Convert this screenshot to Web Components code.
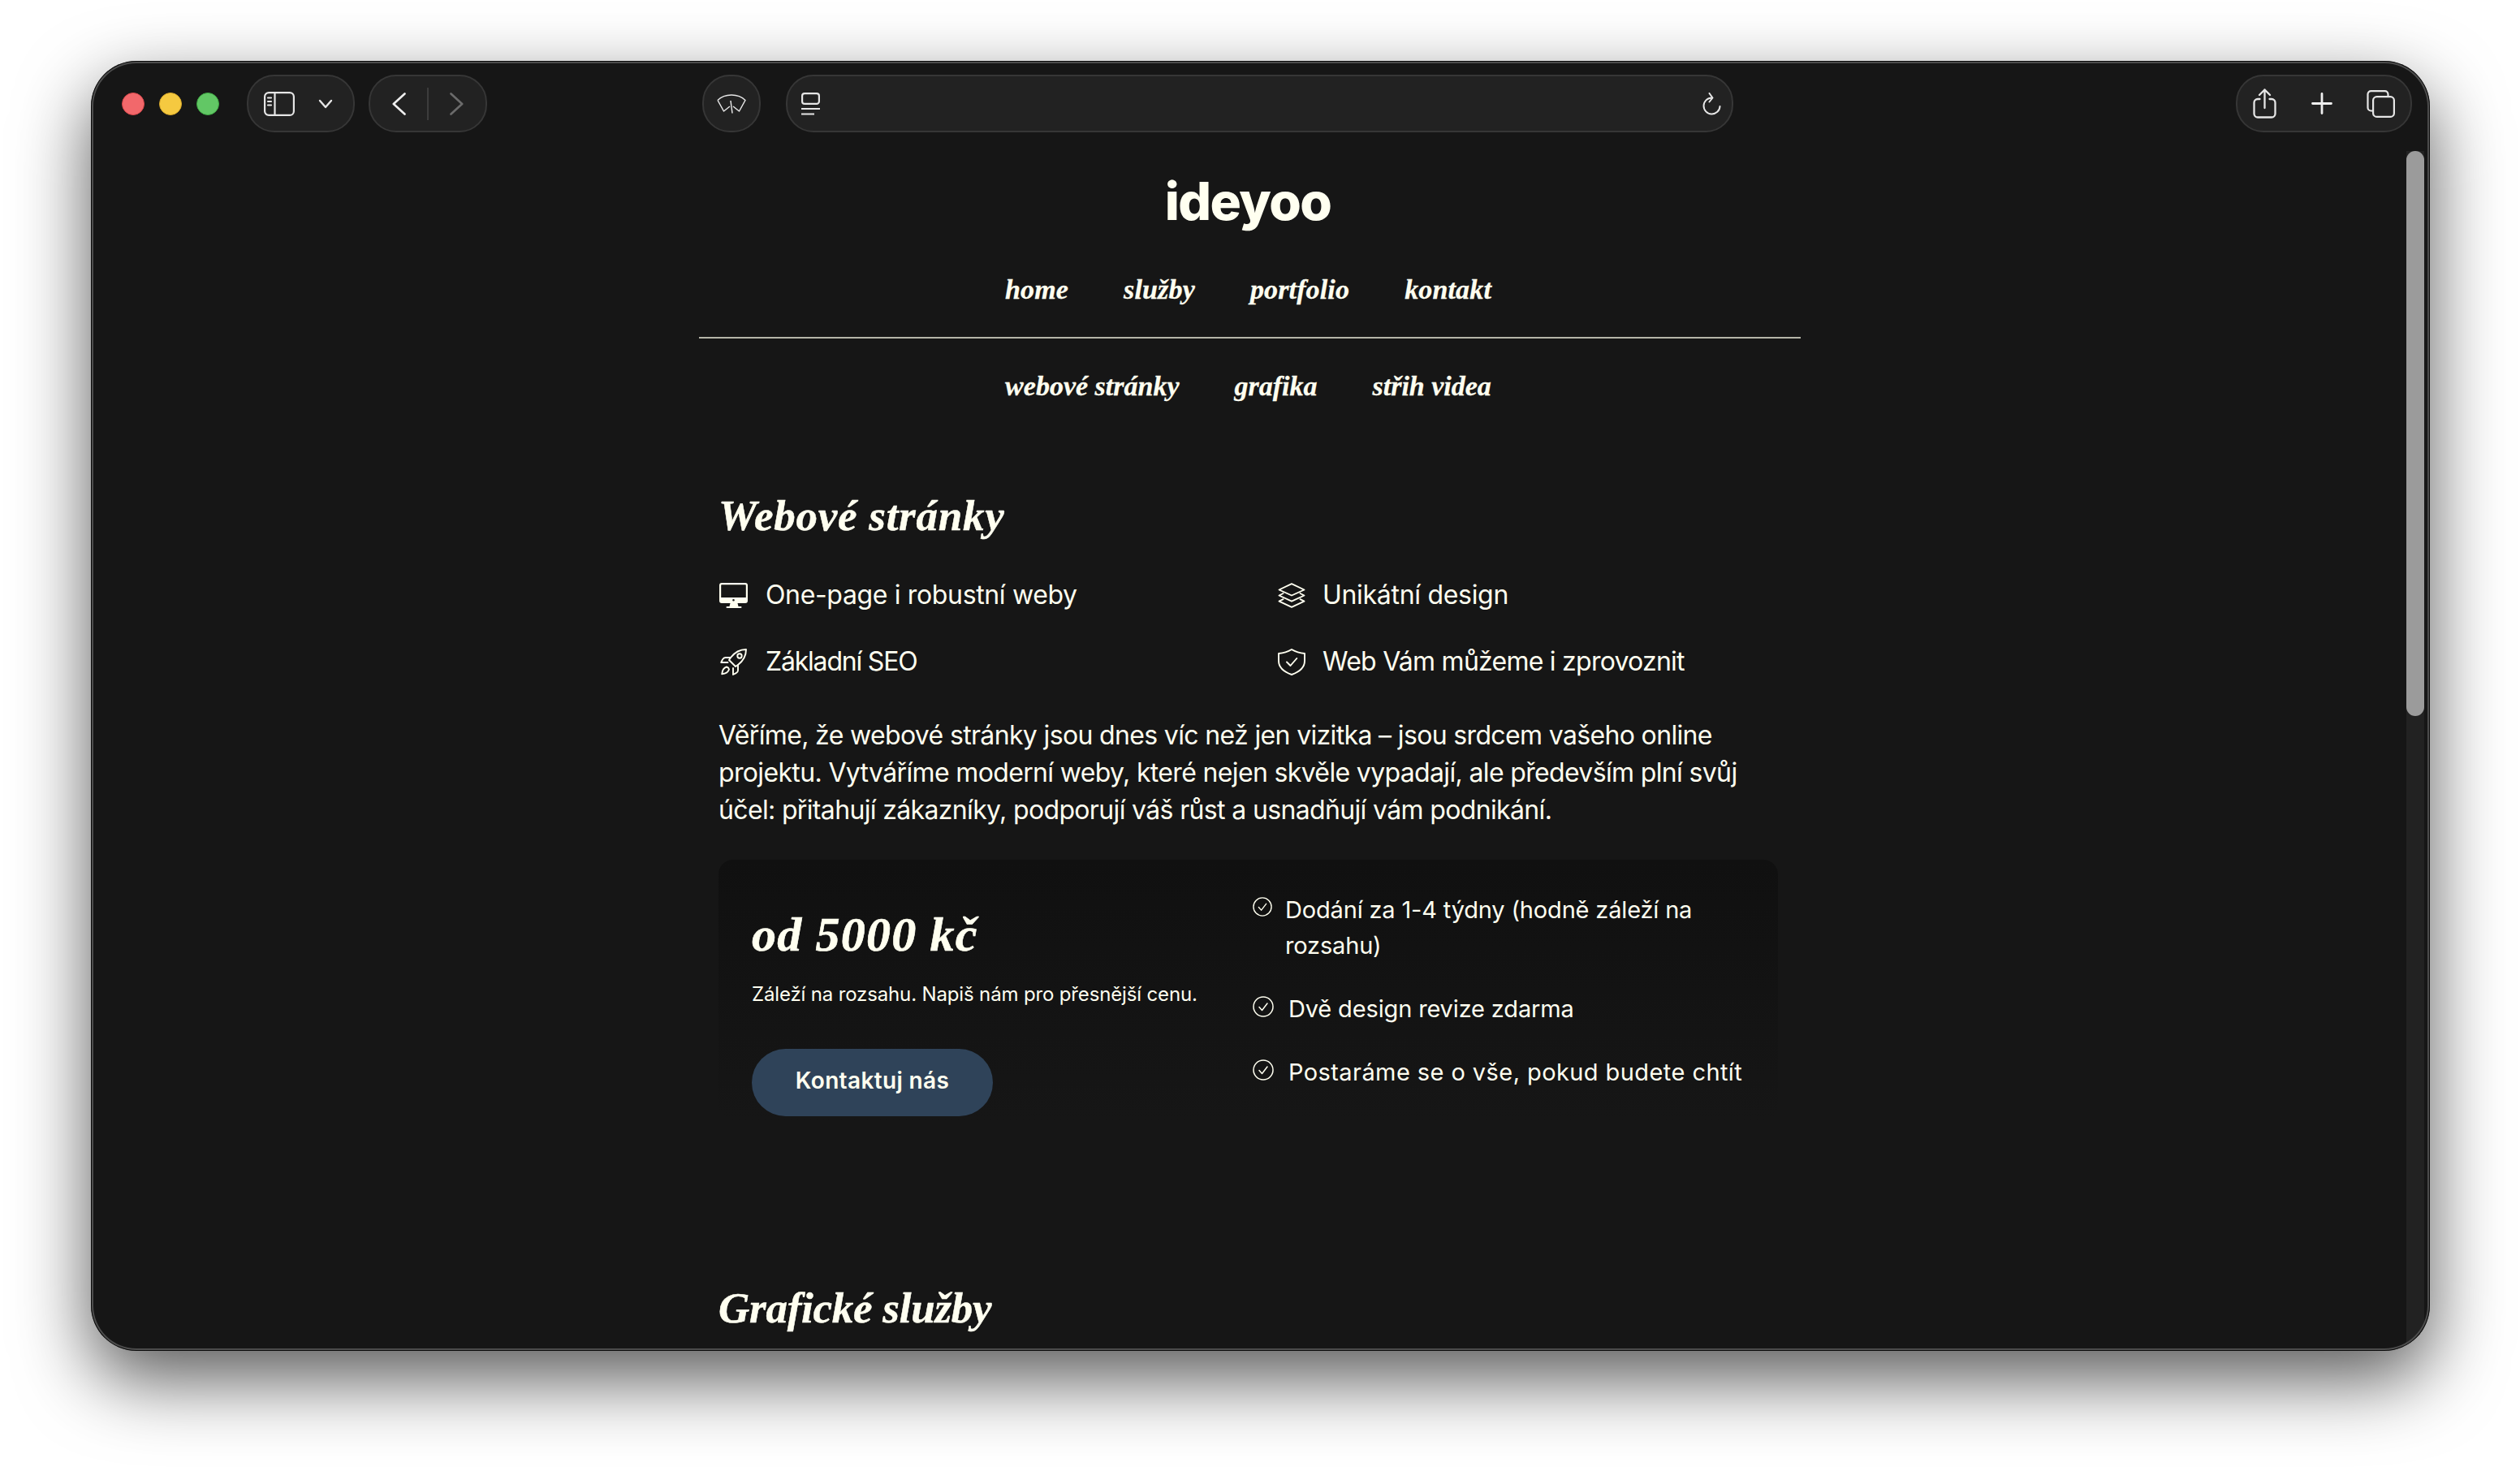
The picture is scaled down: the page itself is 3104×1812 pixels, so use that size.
<!DOCTYPE html>
<html lang="cs">
<head>
<meta charset="utf-8">
<title>ideyoo</title>
<style>
    html, body { margin: 0; height: 100%; background: #fff; }
    body { display: flex; padding: 75px 111px 148px 112px; box-sizing: border-box; height: 1812px; overflow: hidden; }
    svg { display: block; }
</style>
</head>
<body>
<browser-window>
    <browser-toolbar slot="toolbar"></browser-toolbar>
    <site-header></site-header>
    <service-section title="Webové stránky" spacing="0.75">
        <feature-list>
            <feature-item style="letter-spacing: -0.35px">
                <svg slot="icon" width="35" height="31" viewBox="0 0 35 31"><path fill="#fffff0" fill-rule="evenodd" d="M3 0h29a3 3 0 0 1 3 3v19a3 3 0 0 1-3 3h-9.500l1 4h3a1 1 0 0 1 0 2H9.500a1 1 0 0 1 0-2h3l1-4H3a3 3 0 0 1-3-3V3a3 3 0 0 1 3-3zm0 2.200a.8.8 0 0 0-.8.8v15h30.600V3a.8.8 0 0 0-.8-.8zM17.500 20a1.300 1.300 0 1 0 0 2.600 1.300 1.300 0 0 0 0-2.600z"/></svg>
                One-page i robustní weby
            </feature-item>
            <feature-item style="letter-spacing: -0.3px; gap: 20px">
                <svg slot="icon" width="34" height="31" viewBox="0 0 34 31"><g fill="none" stroke="#fffff0" stroke-width="1.900" stroke-linejoin="round" stroke-linecap="round"><path d="M17 1.200 32.500 8.500 17 15.500 1.500 8.500z"/><path d="M6.500 13 1.500 15.500 17 22.700 32.500 15.500 27.500 13"/><path d="M6.500 20.200 1.500 22.700 17 29.800 32.500 22.700 27.500 20.200"/></g></svg>
                Unikátní design
            </feature-item>
            <feature-item style="letter-spacing: -1.2px">
                <svg slot="icon" width="33" height="33" viewBox="0 0 33 33"><g fill="none" stroke="#fffff0" stroke-width="1.900" stroke-linejoin="round" stroke-linecap="round"><path d="M32 1C24.500 1 18 4.500 13 11l-2 3 8 8 3-2c6.500-5 10-11.500 10-19z"/><path d="M13 11H6.500C5 11 3.800 12 3 13.400L1.200 17H9.500"/><path d="M22 20v6.800c0 1.500-1 2.700-2.400 3.400L16 32v-8"/><circle cx="24" cy="9" r="2.700"/><path d="M8 22.500c-3 .8-5.300 3.800-5.800 8.800 5-.5 8-2.800 8.800-5.800-.3-1.300-1.700-2.700-3-3z"/></g></svg>
                Základní SEO
            </feature-item>
            <feature-item style="letter-spacing: -0.75px; gap: 20px">
                <svg slot="icon" width="34" height="33" viewBox="0 0 34 33"><g fill="none" stroke="#fffff0" stroke-width="1.900" stroke-linejoin="round" stroke-linecap="round"><path d="M17 1c5 3 10 4.500 16 5v9c0 8-6 13.500-16 17C7 28.500 1 23 1 15V6c6-.5 11-2 16-5z"/><path d="M11 16.500l4.500 4.500 7.800-9"/></g></svg>
                Web Vám můžeme i zprovoznit
            </feature-item>
        </feature-list>
        <p>Věříme, že webové stránky jsou dnes víc než jen vizitka – jsou srdcem vašeho online<br>projektu. Vytváříme moderní weby, které nejen skvěle vypadají, ale především plní svůj<br>účel: přitahují zákazníky, podporují váš růst a usnadňují vám podnikání.</p>
        <price-card price="od 5000 kč" note="Záleží na rozsahu. Napiš nám pro přesnější cenu." action="Kontaktuj nás">
            <check-item size="24" gap="16" style="letter-spacing: -0.17px">Dodání za 1-4 týdny (hodně záleží na rozsahu)</check-item>
            <check-item style="letter-spacing: -0.15px">Dvě design revize zdarma</check-item>
            <check-item style="letter-spacing: 0.42px">Postaráme se o vše, pokud budete chtít</check-item>
        </price-card>
    </service-section>
    <service-section title="Grafické služby" spacing="-0.25" class="next"></service-section>
</browser-window>

<script>
class BrowserWindow extends HTMLElement {
    constructor() {
        super();
        this.attachShadow({ mode: "open" });
    }

    connectedCallback() {
        this.shadowRoot.innerHTML = `
        <style>
            :host {
                display: flex;
                flex-direction: column;
                position: relative;
                width: 100%;
                background: #161616;
                border-radius: 56px;
                box-shadow: 0 35px 90px rgba(0, 0, 0, 0.65);
                font-family: "Inter", sans-serif;
                color: #fffff0;
            }
            .frame {
                position: relative;
                display: flex;
                flex-direction: column;
                height: 100%;
                overflow: hidden;
                border-radius: 56px;
            }
            .page {
                flex: 1;
                min-height: 0;
                overflow: hidden;
                padding-right: 26px;
                display: flex;
                flex-direction: column;
                align-items: center;
            }
            .column {
                width: 1357px;
            }
            .thumb {
                position: absolute;
                top: 111px;
                right: 7px;
                width: 22px;
                height: 696px;
                border-radius: 11px;
                background: #9b9b9b;
            }
            .track {
                position: absolute;
                top: 111px;
                bottom: 0;
                right: 7px;
                width: 22px;
                background: #222;
            }
            .edge {
                position: absolute;
                inset: 0;
                border-radius: 56px;
                pointer-events: none;
                box-shadow: inset 0 0 0 1px #0a0a0a, inset 0 0 0 3px #4c4c4c;
            }
        </style>
        <div class="frame">
            <slot name="toolbar"></slot>
            <div class="page"><div class="column"><slot></slot></div></div>
            <div class="track"></div>
            <div class="thumb"></div>
            <div class="edge"></div>
        </div>
        `;
    }
}

class BrowserToolbar extends HTMLElement {
    constructor() {
        super();
        this.attachShadow({ mode: "open" });
    }

    connectedCallback() {
        this.shadowRoot.innerHTML = `
        <style>
            :host {
                display: flex;
                align-items: center;
                flex: none;
                height: 71px;
                padding: 17px 22px 0 38px;
            }
            svg { display: block; flex: none; }
            .lights { display: flex; gap: 18px; margin-right: 34px; }
            .lights span { width: 28px; height: 28px; border-radius: 50%; box-sizing: border-box; }
            .red { background: #f2686b; border: 1px solid #d9484c; }
            .yellow { background: #f5c940; border: 1px solid #d9a92a; }
            .green { background: #62c765; border: 1px solid #3fa844; }
            .group {
                display: flex;
                align-items: center;
                box-sizing: border-box;
                height: 71px;
                background: #222;
                border: 2px solid #363636;
                border-radius: 34px;
            }
            .side { width: 133px; padding-left: 19px; margin-right: 17px; }
            .side svg + svg { margin-left: 29px; }
            .nav { width: 146px; padding-left: 27px; margin-right: 265px; }
            .sep { width: 2px; height: 40px; background: #3c3c3c; margin: 0 26px 0 26px; }
            .shield { width: 72px; justify-content: center; margin-right: 31px; }
            .url { width: 1167px; justify-content: space-between; padding: 0 13px 0 17px; }
            .actions { width: 217px; margin-left: auto; padding-left: 19px; }
            .actions svg:nth-child(2) { margin-left: 43px; }
            .actions svg:nth-child(3) { margin-left: 42px; }
        </style>
        <div class="lights"><span class="red"></span><span class="yellow"></span><span class="green"></span></div>
        <div class="group side">
            <svg width="38" height="30" viewBox="0 0 38 30" fill="none" stroke="#e6e6e6" stroke-width="2.200"><rect x="1.100" y="1.100" width="35.800" height="27.800" rx="5"/><path d="M13.500 1v28"/><path d="M5 7.500h4M5 12h4M5 16.500h4" stroke-linecap="round"/></svg>
            <svg width="18" height="12" viewBox="0 0 18 12" fill="none" stroke="#e6e6e6" stroke-width="2.400" stroke-linecap="round" stroke-linejoin="round"><path d="M2 2l7 8 7-8"/></svg>
        </div>
        <div class="group nav">
            <svg width="17" height="28" viewBox="0 0 17 28" fill="none" stroke="#eee" stroke-width="2.600" stroke-linecap="round" stroke-linejoin="round"><path d="M15.500 1.500 1.800 14l13.700 12.500"/></svg>
            <div class="sep"></div>
            <svg width="17" height="28" viewBox="0 0 17 28" fill="none" stroke="#6b6b6b" stroke-width="2.600" stroke-linecap="round" stroke-linejoin="round"><path d="M1.500 1.500 15.200 14 1.500 26.500"/></svg>
        </div>
        <div class="group shield">
            <svg width="36" height="24" viewBox="0 0 36 24" fill="none" stroke="#e6e6e6" stroke-width="1.500" stroke-linejoin="round"><path d="M1 7.500C6 2.500 12 1 18 1s12 1.500 17 6.500L27.500 21 20 15"/><path d="M1 7.500 8.500 21 16 15"/><path d="M17 8l2 15.500"/></svg>
        </div>
        <div class="group url">
            <svg width="23" height="28" viewBox="0 0 23 28" fill="none" stroke="#e6e6e6" stroke-width="2.200"><rect x="1.100" y="1.100" width="20.800" height="12.800" rx="3"/><path d="M0 20h23M0 26.500h16"/></svg>
            <svg width="23" height="28" viewBox="0 0 23 28" fill="none" stroke="#e6e6e6" stroke-width="2" stroke-linecap="round" stroke-linejoin="round"><path d="M11.500 6.500A10 10 0 1 0 21.500 17"/><path d="M8.500 1l4 5.500-4 5"/></svg>
        </div>
        <div class="group actions">
            <svg width="29" height="37" viewBox="0 0 29 37" fill="none" stroke="#e6e6e6" stroke-width="2.300" stroke-linecap="round" stroke-linejoin="round"><path d="M8.500 13H6a4.500 4.500 0 0 0-4.500 4.500V31A4.500 4.500 0 0 0 6 35.500h17a4.500 4.500 0 0 0 4.500-4.500V17.500A4.500 4.500 0 0 0 23 13h-2.500"/><path d="M14.500 24V1.500M8 8l6.500-6.500L21 8"/></svg>
            <svg width="26" height="27" viewBox="0 0 26 27" fill="none" stroke="#eee" stroke-width="2.800" stroke-linecap="round"><path d="M13 1.500v24M1.500 13.500h23"/></svg>
            <svg width="35" height="34" viewBox="0 0 35 34" fill="none" stroke="#e6e6e6" stroke-width="2.200"><path d="M7 25.500H5.500a4 4 0 0 1-4-4V5.100a4 4 0 0 1 4-4h17a4 4 0 0 1 4 4V8"/><rect x="8.100" y="8.100" width="25.800" height="24.800" rx="4.500"/></svg>
        </div>
        `;
    }
}

class SiteHeader extends HTMLElement {
    constructor() {
        super();
        this.attachShadow({ mode: "open" });
    }

    connectedCallback() {
        this.shadowRoot.innerHTML = `
        <style>
            :host { display: block; padding-top: 53px; }
            h1 {
                margin: 0 0 57px;
                padding-right: 5px;
                text-align: center;
                font: 800 64px/64px "Inter", sans-serif;
                letter-spacing: -1.600px;
            }
            nav {
                display: flex;
                justify-content: center;
                gap: 68px;
                padding-right: 4px;
                font: italic 700 34px/40px "Liberation Serif", serif;
                letter-spacing: 0.150px;
                -webkit-text-stroke: 0.3px #fffff0;
            }
            nav.sub { letter-spacing: 0; }
            hr {
                margin: 38px 0 39px;
                height: 2px;
                border: 0;
                background: #b5b5a8;
            }
        </style>
        <h1>ideyoo</h1>
        <nav><span>home</span><span>služby</span><span>portfolio</span><span>kontakt</span></nav>
        <hr>
        <nav class="sub"><span>webové stránky</span><span>grafika</span><span>střih videa</span></nav>
        `;
    }
}

class ServiceSection extends HTMLElement {
    constructor() {
        super();
        this.attachShadow({ mode: "open" });
    }

    connectedCallback() {
        const spacing = this.getAttribute("spacing") || 0;
        this.shadowRoot.innerHTML = `
        <style>
            :host { display: block; padding: 107px 24px 0; }
            :host(.next) { padding-top: 199px; }
            h2 {
                margin: 0 0 46px;
                font: italic 700 53px/64px "Liberation Serif", serif;
                letter-spacing: ${spacing}px;
                -webkit-text-stroke: 0.5px #fffff0;
            }
            ::slotted(p) {
                margin: 48px 0 38px;
                font: 400 32px/46px "Inter", sans-serif;
                letter-spacing: -0.650px;
            }
        </style>
        <h2>${this.getAttribute("title")}</h2>
        <slot></slot>
        `;
    }
}

class FeatureList extends HTMLElement {
    constructor() {
        super();
        this.attachShadow({ mode: "open" });
    }

    connectedCallback() {
        this.shadowRoot.innerHTML = `
        <style>
            :host {
                display: grid;
                grid-template-columns: 688px 1fr;
                row-gap: 42px;
            }
        </style>
        <slot></slot>
        `;
    }
}

class FeatureItem extends HTMLElement {
    constructor() {
        super();
        this.attachShadow({ mode: "open" });
    }

    connectedCallback() {
        this.shadowRoot.innerHTML = `
        <style>
            :host {
                display: flex;
                align-items: center;
                gap: 22px;
                font: 400 32px/40px "Inter", sans-serif;
            }
            .icon { width: 36px; display: flex; justify-content: center; flex: none; }
        </style>
        <div class="icon"><slot name="icon"></slot></div>
        <div><slot></slot></div>
        `;
    }
}

class PriceCard extends HTMLElement {
    constructor() {
        super();
        this.attachShadow({ mode: "open" });
    }

    connectedCallback() {
        this.shadowRoot.innerHTML = `
        <style>
            :host {
                display: grid;
                grid-template-columns: 618px 1fr;
                height: 321px;
                width: 1305px;
                box-sizing: border-box;
                border-radius: 18px;
                background: linear-gradient(#101010, #161616);
            }
            .left { padding: 56px 0 0 41px; }
            .price {
                font: italic 700 60px/72px "Liberation Serif", serif;
                letter-spacing: 1.200px;
                -webkit-text-stroke: 0.6px #fffff0;
            }
            .note {
                margin: 22px 0 51px;
                font: 400 24px/32px "Inter", sans-serif;
                letter-spacing: -0.150px;
            }
            .cta {
                display: flex;
                align-items: center;
                justify-content: center;
                box-sizing: border-box;
                width: 297px;
                height: 83px;
                padding-bottom: 5px;
                border-radius: 42px;
                background: #2f4359;
                font: 600 28px/32px "Inter", sans-serif;
                letter-spacing: 0.350px;
            }
            .right {
                display: flex;
                flex-direction: column;
                gap: 34px;
                padding: 40px 30px 0 0;
                margin-left: 40px;
            }
        </style>
        <div class="left">
            <div class="price">${this.getAttribute("price")}</div>
            <div class="note">${this.getAttribute("note")}</div>
            <div class="cta">${this.getAttribute("action")}</div>
        </div>
        <div class="right"><slot></slot></div>
        `;
    }
}

class CheckItem extends HTMLElement {
    constructor() {
        super();
        this.attachShadow({ mode: "open" });
    }

    connectedCallback() {
        const size = this.getAttribute("size") || 26;
        const gap = this.getAttribute("gap") || 18;
        this.shadowRoot.innerHTML = `
        <style>
            :host {
                display: flex;
                align-items: flex-start;
                gap: ${gap}px;
                font: 400 29px/44px "Inter", sans-serif;
            }
            svg { flex: none; margin-top: 6px; }
        </style>
        <svg width="${size}" height="${size}" viewBox="0 0 26 26" fill="none" stroke="#fffff0" stroke-width="1.500" stroke-linecap="round" stroke-linejoin="round"><circle cx="13" cy="13" r="12"/><path d="M8 13.500l3.500 4 6.500-8.500"/></svg>
        <div><slot></slot></div>
        `;
    }
}

customElements.define("browser-window", BrowserWindow);
customElements.define("browser-toolbar", BrowserToolbar);
customElements.define("site-header", SiteHeader);
customElements.define("service-section", ServiceSection);
customElements.define("feature-list", FeatureList);
customElements.define("feature-item", FeatureItem);
customElements.define("price-card", PriceCard);
customElements.define("check-item", CheckItem);
</script>
</body>
</html>
